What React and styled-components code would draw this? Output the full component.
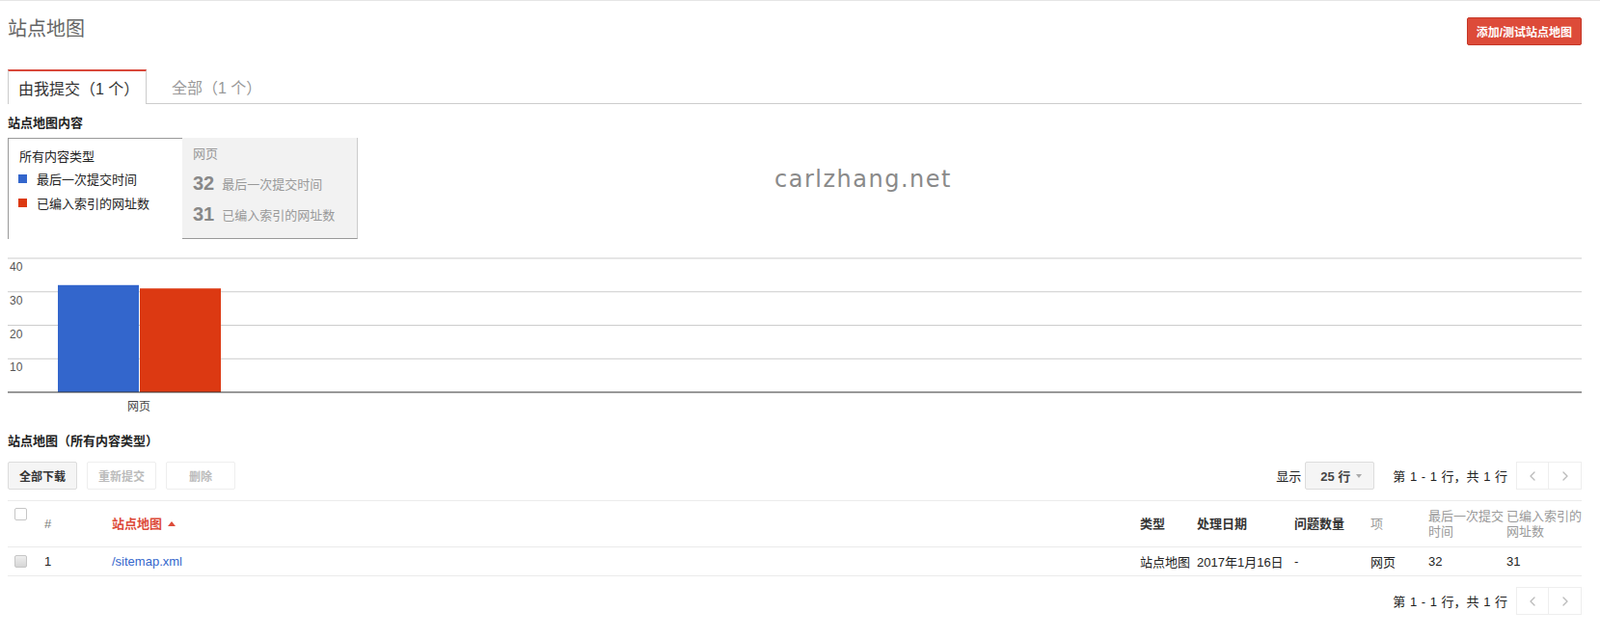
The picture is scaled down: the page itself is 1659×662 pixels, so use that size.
import styled, { createGlobalStyle } from "styled-components";
import { ChevronLeft, ChevronRight } from "lucide-react";

const GlobalStyle = createGlobalStyle`
  * { box-sizing: border-box; }
  body {
    margin: 0;
    background: #fff;
    color: #333;
    font-family: "Liberation Sans", Arial, "Noto Sans CJK SC", sans-serif;
  }
`;

const bars = [
  { label: "最后一次提交时间", value: 32, color: "#3366cc" },
  { label: "已编入索引的网址数", value: 31, color: "#dc3912" },
];

const columns = [
  { key: "type", title: "类型", width: 59, active: true },
  { key: "date", title: "处理日期", width: 101, active: true },
  { key: "issues", title: "问题数量", width: 79, active: true },
  { key: "items", title: "项", width: 60 },
  { key: "submitted", title: "最后一次提交时间", width: 81 },
  { key: "indexed", title: "已编入索引的网址数", width: 78 },
];

const rows = [
  {
    id: 1,
    path: "/sitemap.xml",
    type: "站点地图",
    date: "2017年1月16日",
    issues: "-",
    items: "网页",
    submitted: 32,
    indexed: 31,
  },
];

const Page = styled.div`
  position: relative;
  width: 1659px;
  border-top: 1px solid #e5e5e5;
  padding: 0 19px 0 8px;
`;

const Header = styled.div`
  display: flex;
  justify-content: space-between;
  align-items: flex-start;
  height: 71px;
`;

const Title = styled.h1`
  margin: 16px 0 0;
  font-size: 20px;
  line-height: 26px;
  font-weight: normal;
  color: #666;
`;

const AddButton = styled.button`
  margin-top: 17px;
  height: 29px;
  padding: 0 9px;
  border: 1px solid #c53727;
  border-radius: 2px;
  background: #dd4b39;
  color: #fff;
  font: bold 12px "Liberation Sans", "Noto Sans CJK SC", sans-serif;
`;

const Tabs = styled.div`
  display: flex;
  height: 36px;
  border-bottom: 1px solid #ccc;
`;

const Tab = styled.div`
  display: flex;
  align-items: center;
  height: 36px;
  font-size: 16px;
  ${(p) =>
    p.$active
      ? `
    width: 144px;
    padding-left: 10px;
    background: #fff;
    color: #333;
    border: 1px solid #ccc;
    border-top: 2px solid #d9483b;
    border-bottom: none;
  `
      : `
    padding-left: 26px;
    color: #999;
  `}
`;

const SectionTitle = styled.h2`
  margin: ${(p) => p.$margin || "12px 0 7px"};
  font-size: 13px;
  line-height: 16px;
  font-weight: bold;
  color: #222;
`;

const Legend = styled.div`
  display: flex;
  height: 105px;
`;

const LegendMain = styled.div`
  width: 181px;
  padding: 9px 0 0 11px;
  border-left: 1px solid #999;
  border-top: 1px solid #999;
  font-size: 13px;
  color: #222;
`;

const LegendHeading = styled.div`
  line-height: 20px;
`;

const LegendItem = styled.div`
  display: flex;
  align-items: center;
  gap: 10px;
  height: 25px;
`;

const Swatch = styled.span`
  width: 9px;
  height: 9px;
  margin-left: -1px;
  background: ${(p) => p.$color};
`;

const LegendPanel = styled.div`
  width: 182px;
  padding: 7px 11px 0;
  background: #f2f2f2;
  border-right: 1px solid #ccc;
  border-bottom: 1px solid #999;
  font-size: 13px;
  color: #999;
`;

const PanelHeading = styled.div`
  line-height: 20px;
  margin-bottom: 4px;
`;

const Stat = styled.div`
  display: flex;
  align-items: center;
  gap: 8px;
  height: 32px;
`;

const StatNumber = styled.span`
  font-size: 20px;
  font-weight: bold;
  color: #888;
`;

const Chart = styled.svg`
  display: block;
  margin-top: 12px;
`;

const Watermark = styled.div`
  position: absolute;
  left: 803px;
  top: 170px;
  font: 24px/30px "DejaVu Sans", sans-serif;
  letter-spacing: 1.5px;
  color: #8a8a8a;
`;

const Bottom = styled.div`
  width: 1632px;
`;

const Toolbar = styled.div`
  display: flex;
  align-items: center;
  justify-content: ${(p) => (p.$end ? "flex-end" : "space-between")};
  height: 29px;
  margin-top: ${(p) => p.$top || 0}px;
`;

const Group = styled.div`
  display: flex;
  align-items: center;
  gap: ${(p) => p.$gap || 0}px;
`;

const ToolButton = styled.button`
  width: 72px;
  height: 29px;
  border-radius: 2px;
  font: bold 12px "Liberation Sans", "Noto Sans CJK SC", sans-serif;
  border: 1px solid ${(p) => (p.disabled ? "#eee" : "#dcdcdc")};
  background: ${(p) => (p.disabled ? "#fff" : "#f5f5f5")};
  color: ${(p) => (p.disabled ? "#bbb" : "#333")};
`;

const ShowLabel = styled.span`
  font-size: 13px;
  color: #222;
  margin-right: 4px;
`;

const Select = styled.div`
  display: flex;
  align-items: center;
  gap: 6px;
  width: 72px;
  height: 29px;
  padding-left: 15px;
  border: 1px solid #dcdcdc;
  border-radius: 2px;
  background: #f5f5f5;
  font-size: 13px;
  font-weight: bold;
  color: #444;
`;

const Caret = styled.span`
  width: 0;
  height: 0;
  border-left: 3px solid transparent;
  border-right: 3px solid transparent;
  border-top: 4px solid #aaa;
`;

const RangeText = styled.span`
  margin: 0 9px 0 19px;
  font-size: 13px;
  color: #222;
  word-spacing: 1px;
`;

const Pager = styled.div`
  display: flex;
`;

const PageButton = styled.div`
  display: flex;
  align-items: center;
  justify-content: center;
  width: 34px;
  height: 29px;
  border: 1px solid #eee;
  & + & {
    border-left: none;
  }
`;

const Table = styled.table`
  width: 100%;
  margin-top: 11px;
  border-collapse: collapse;
  table-layout: fixed;
  border-top: 1px solid #ebebeb;
`;

const Th = styled.th`
  height: 48px;
  padding: 0;
  text-align: left;
  font-size: 13px;
  line-height: 16px;
  vertical-align: ${(p) => (p.$top ? "top" : "middle")};
  padding-top: ${(p) => (p.$top ? 7 : 0)}px;
  padding-left: ${(p) => (p.$top ? 7 : 0)}px;
  font-weight: ${(p) => (p.$bold ? "bold" : "normal")};
  color: ${(p) => p.$color || "#999"};
  border-bottom: 1px solid #ebebeb;
`;

const Td = styled.td`
  height: 30px;
  padding: 0 0 0 ${(p) => p.$pad || 0}px;
  font-size: 13px;
  color: ${(p) => p.$color || "#222"};
  white-space: nowrap;
  border-bottom: 1px solid #ebebeb;
`;

const Check = styled.span`
  display: block;
  width: 13px;
  height: 13px;
  border: 1px solid #c6c6c6;
  border-radius: 2px;
  background: ${(p) => (p.$filled ? "linear-gradient(#eee, #d6d6d6)" : "#fff")};
`;

const SortArrow = styled.span`
  display: inline-block;
  margin-left: 6px;
  vertical-align: 2px;
  border-left: 4px solid transparent;
  border-right: 4px solid transparent;
  border-bottom: 5px solid #dd4b39;
`;

const BarChart = () => {
  const base = 147;
  const y = (v) => base - (v * 139) / 40;
  return (
    <Chart width="1632" height="170">
      {[40, 30, 20, 10].map((t) => (
        <g key={t}>
          <line x1="0" x2="1632" y1={y(t)} y2={y(t)} stroke="#ccc" />
          <text x="2" y={y(t) + 13} fontSize="12" fill="#555" fontFamily="Liberation Sans, sans-serif">
            {t}
          </text>
        </g>
      ))}
      {bars.map((b, i) => (
        <rect
          key={b.label}
          x={52 + i * 85}
          y={y(b.value)}
          width={84}
          height={base - y(b.value)}
          fill={b.color}
        />
      ))}
      <line x1="0" x2="1632" y1={base} y2={base} stroke="#333" />
      <text x="136" y="166" fontSize="12" fill="#444" textAnchor="middle" fontFamily="Noto Sans CJK SC, sans-serif">
        网页
      </text>
    </Chart>
  );
};

const PagerControls = () => (
  <>
    <RangeText>第 1 - 1 行，共 1 行</RangeText>
    <Pager>
      <PageButton>
        <ChevronLeft size={16} color="#bbb" strokeWidth={2} />
      </PageButton>
      <PageButton>
        <ChevronRight size={16} color="#bbb" strokeWidth={2} />
      </PageButton>
    </Pager>
  </>
);

const App = () => {
  return (
    <Page>
      <GlobalStyle />
      <Header>
        <Title>站点地图</Title>
        <AddButton>添加/测试站点地图</AddButton>
      </Header>

      <Tabs>
        <Tab $active>由我提交（1 个）</Tab>
        <Tab>全部（1 个）</Tab>
      </Tabs>

      <SectionTitle>站点地图内容</SectionTitle>
      <Legend>
        <LegendMain>
          <LegendHeading>所有内容类型</LegendHeading>
          {bars.map((b) => (
            <LegendItem key={b.label}>
              <Swatch $color={b.color} />
              {b.label}
            </LegendItem>
          ))}
        </LegendMain>
        <LegendPanel>
          <PanelHeading>网页</PanelHeading>
          {bars.map((b) => (
            <Stat key={b.label}>
              <StatNumber>{b.value}</StatNumber>
              {b.label}
            </Stat>
          ))}
        </LegendPanel>
      </Legend>

      <BarChart />

      <Watermark>carlzhang.net</Watermark>

      <Bottom>
        <SectionTitle $margin="20px 0 0">站点地图（所有内容类型）</SectionTitle>
        <Toolbar $top={13}>
          <Group $gap={10}>
            <ToolButton>全部下载</ToolButton>
            <ToolButton disabled>重新提交</ToolButton>
            <ToolButton disabled>删除</ToolButton>
          </Group>
          <Group>
            <ShowLabel>显示</ShowLabel>
            <Select>
              25 行 <Caret />
            </Select>
            <PagerControls />
          </Group>
        </Toolbar>

        <Table>
          <colgroup>
            <col style={{ width: 38 }} />
            <col style={{ width: 70 }} />
            <col />
            {columns.map((c) => (
              <col key={c.key} style={{ width: c.width }} />
            ))}
          </colgroup>
          <thead>
            <tr>
              <Th $top>
                <Check />
              </Th>
              <Th $color="#777">#</Th>
              <Th $bold $color="#dd4b39">
                站点地图
                <SortArrow />
              </Th>
              {columns.map((c) => (
                <Th key={c.key} $bold={c.active} $color={c.active ? "#333" : "#999"}>
                  {c.title}
                </Th>
              ))}
            </tr>
          </thead>
          <tbody>
            {rows.map((r) => (
              <tr key={r.id}>
                <Td $pad={7}>
                  <Check $filled />
                </Td>
                <Td>{r.id}</Td>
                <Td $color="#3366cc">{r.path}</Td>
                <Td>{r.type}</Td>
                <Td>{r.date}</Td>
                <Td>{r.issues}</Td>
                <Td>{r.items}</Td>
                <Td>{r.submitted}</Td>
                <Td>{r.indexed}</Td>
              </tr>
            ))}
          </tbody>
        </Table>

        <Toolbar $end $top={11}>
          <PagerControls />
        </Toolbar>
      </Bottom>
    </Page>
  );
};

export default App;
